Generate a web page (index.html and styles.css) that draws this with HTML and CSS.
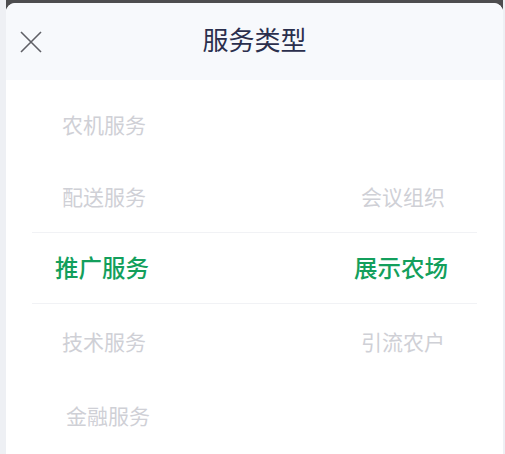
FILE: index.html
```html
<!DOCTYPE html>
<html lang="zh">
<head>
<meta charset="utf-8">
<link rel="stylesheet" href="styles.css">
</head>
<body>
<div class="backdrop">
  <div class="sheet">
    <div class="header">
      <button class="close" aria-label="关闭">
        <svg width="22" height="22" viewBox="0 0 22 22"><path d="M1 1 L21 21 M21 1 L1 21" stroke="#5f6066" stroke-width="1.6" fill="none"/></svg>
      </button>
      <div class="title">服务类型</div>
    </div>
    <div class="picker">
      <div class="row"><span class="cell left">农机服务</span><span class="cell right"></span></div>
      <div class="row"><span class="cell left">配送服务</span><span class="cell right">会议组织</span></div>
      <div class="row selected"><span class="cell left">推广服务</span><span class="cell right">展示农场</span></div>
      <div class="row low"><span class="cell left">技术服务</span><span class="cell right">引流农户</span></div>
      <div class="row low"><span class="cell left far">金融服务</span><span class="cell right"></span></div>
    </div>
  </div>
</div>
</body>
</html>
```

FILE: styles.css
```css
html, body {
  margin: 0;
  padding: 0;
  height: 100%;
  background: #eef0f4;
  font-family: "Noto Sans CJK SC", "Noto Sans", sans-serif;
}
.backdrop {
  margin: 0 2px 0 6px;
  height: 100%;
  padding-top: 3px;
  box-sizing: border-box;
  background: linear-gradient(#4d4d4f 0, #4d4d4f 10px, #ffffff 10px);
}
.sheet {
  height: 100%;
  background: #ffffff;
  border-radius: 9px 9px 0 0;
  overflow: hidden;
}
.header {
  height: 77px;
  background: #f7f9fc;
  display: flex;
  align-items: center;
  justify-content: center;
  position: relative;
}
.close {
  position: absolute;
  left: 14px;
  top: 28px;
  width: 22px;
  height: 22px;
  padding: 0;
  border: none;
  background: none;
  display: flex;
}
.title {
  font-size: 26px;
  color: #2b2f4d;
  line-height: 1;
  margin-top: -6px;
}
.picker {
  margin: 8px 26px 0 26px;
  display: flex;
  flex-direction: column;
}
.row {
  height: 72px;
  display: flex;
  justify-content: space-between;
  align-items: center;
  padding: 0 24px 0 22px;
  font-size: 21px;
  color: #cfd0d6;
}
.row.low {
  height: 74px;
}
.cell {
  width: 100px;
  text-align: center;
  line-height: 1;
}
.cell.far {
  transform: translateX(4px);
}
.row.selected {
  border-top: 1.5px solid #f1f2f5;
  border-bottom: 1.5px solid #f1f2f5;
  box-sizing: border-box;
  color: #139f5c;
  font-size: 23.5px;
  font-weight: 500;
  padding: 0 26px 0 20px;
}
```
